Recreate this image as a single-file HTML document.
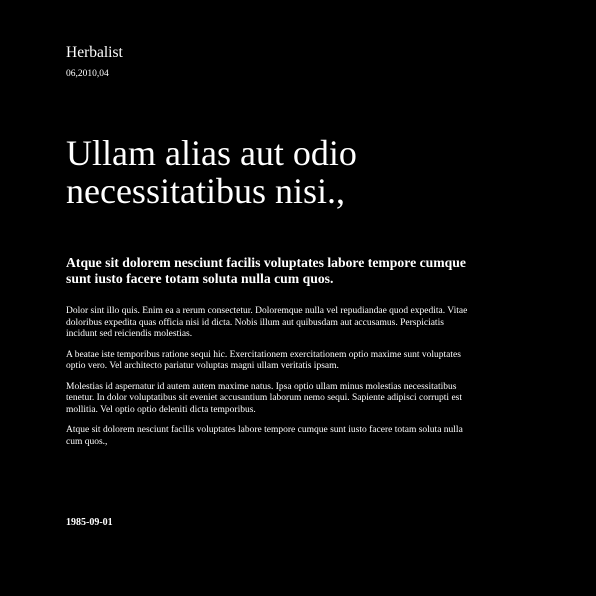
<!DOCTYPE html>
<html><head><style>
body{margin:0;background:#000;width:596px;height:596px;overflow:hidden;color:#fff;font-family:"Liberation Serif",serif;position:relative}
div{position:absolute;left:66px}
.h{top:44px;font-size:15.5px}
.d{top:69px;font-size:9.5px}
.t{top:134px;font-size:36px;line-height:38px;width:420px}
.s{top:255px;font-size:13.7px;font-weight:bold;line-height:15.5px;width:410px}
.b{top:306px;width:410px;font-size:9.5px;line-height:11.5px}
.b p{margin:0 0 9px}
.f{top:517px;font-size:10px;font-weight:bold}
</style></head><body>
<div class="h">Herbalist</div>
<div class="d">06,2010,04</div>
<div class="t">Ullam alias aut odio necessitatibus nisi.,</div>
<div class="s">Atque sit dolorem nesciunt facilis voluptates labore tempore cumque sunt iusto facere totam soluta nulla cum quos.</div>
<div class="b">
<p>Dolor sint illo quis. Enim ea a rerum consectetur. Doloremque nulla vel repudiandae quod expedita. Vitae doloribus expedita quas officia nisi id dicta. Nobis illum aut quibusdam aut accusamus. Perspiciatis incidunt sed reiciendis molestias.</p>
<p>A beatae iste temporibus ratione sequi hic. Exercitationem exercitationem optio maxime sunt voluptates optio vero. Vel architecto pariatur voluptas magni ullam veritatis ipsam.</p>
<p>Molestias id aspernatur id autem autem maxime natus. Ipsa optio ullam minus molestias necessitatibus tenetur. In dolor voluptatibus sit eveniet accusantium laborum nemo sequi. Sapiente adipisci corrupti est mollitia. Vel optio optio deleniti dicta temporibus.</p>
<p>Atque sit dolorem nesciunt facilis voluptates labore tempore cumque sunt iusto facere totam soluta nulla cum quos.,</p>
</div>
<div class="f">1985-09-01</div>
</body></html>
